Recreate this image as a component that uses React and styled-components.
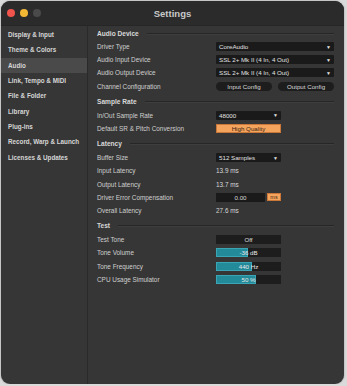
import React from "react";
import styled, { createGlobalStyle } from "styled-components";

const Global = createGlobalStyle`
  html, body { margin: 0; padding: 0; background: #dadada; }
  body { font-family: "Liberation Sans", Arial, sans-serif; }
`;

const Win = styled.div`
  width: 343px;
  height: 383px;
  margin: 1px 0 0 1px;
  border-radius: 9px;
  overflow: hidden;
  background: #363636;
  display: flex;
  flex-direction: column;
  box-shadow: 0 0 2px rgba(0, 0, 0, 0.35);
`;

const TitleBar = styled.div`
  height: 24px;
  flex: none;
  background: #2b2b2b;
  border-bottom: 1px solid #262626;
  display: flex;
  align-items: center;
  position: relative;
  padding-left: 6px;
  gap: 5px;
`;

const Light = styled.span`
  width: 8px;
  height: 8px;
  border-radius: 50%;
  background: ${(p) => p.c};
`;

const Title = styled.div`
  position: absolute;
  left: 0;
  right: 0;
  text-align: center;
  font-size: 9.5px;
  font-weight: 700;
  color: #c9c9c9;
  pointer-events: none;
`;

const Body = styled.div`
  flex: 1;
  display: flex;
`;

const Sidebar = styled.div`
  width: 86px;
  flex: none;
  border-right: 1px solid #2a2a2a;
  padding-top: 1px;
`;

const NavItem = styled.div`
  height: 15.3px;
  display: flex;
  align-items: center;
  padding-left: 7px;
  font-size: 6.3px;
  font-weight: 700;
  color: #d6d6d6;
  background: ${(p) => (p.active ? "#4a4a4a" : "transparent")};
  white-space: nowrap;
`;

const Main = styled.div`
  flex: 1;
  padding: 1px 10px 0 9px;
`;

const SectionHead = styled.div`
  height: ${(p) => (p.first ? 13 : 15)}px;
  margin-top: ${(p) => (p.first ? 0 : 1)}px;
  display: flex;
  align-items: center;
  gap: 8px;
  font-size: 6.6px;
  font-weight: 700;
  color: #d8d8d8;
  &::after {
    content: "";
    flex: 1;
    height: 1px;
    background: #262626;
    box-shadow: 0 1px 0 #3e3e3e;
  }
`;

const Row = styled.div`
  height: 13.2px;
  display: flex;
  align-items: center;
`;

const Label = styled.div`
  width: 119px;
  flex: none;
  font-size: 6.4px;
  color: #cfcfcf;
  white-space: nowrap;
`;

const Controls = styled.div`
  flex: 1;
  display: flex;
  gap: 6px;
`;

const Select = styled.div`
  width: ${(p) => (p.wide ? "118px" : "65px")};
  height: 9px;
  box-sizing: border-box;
  background: #1a1a1a;
  border-radius: 1px;
  display: flex;
  align-items: center;
  justify-content: space-between;
  padding: 0 3px 0 3px;
  font-size: 6.2px;
  color: #e2e2e2;
  white-space: nowrap;
`;

const Arrow = styled.span`
  font-size: 5px;
  color: #e0e0e0;
`;

const Pill = styled.div`
  width: 56px;
  height: 9px;
  border-radius: 5px;
  background: #1d1d1d;
  display: flex;
  align-items: center;
  justify-content: center;
  font-size: 6.2px;
  color: #d8d8d8;
`;

const Toggle = styled.div`
  width: 65px;
  height: 9px;
  box-sizing: border-box;
  background: ${(p) => (p.on ? "#f5a45e" : "#1d1d1d")};
  border: 1px solid ${(p) => (p.on ? "#c9783a" : "#1d1d1d")};
  display: flex;
  align-items: center;
  justify-content: center;
  font-size: 6.2px;
  color: ${(p) => (p.on ? "#3a2410" : "#dcdcdc")};
`;

const Value = styled.div`
  font-size: 6.4px;
  color: #d6d6d6;
`;

const NumField = styled.div`
  width: 49px;
  height: 9px;
  background: #1a1a1a;
  display: flex;
  align-items: center;
  justify-content: center;
  font-size: 6.2px;
  color: #d8d8d8;
`;

const Unit = styled.div`
  width: 14px;
  height: 8px;
  margin-left: -4px;
  background: #f5a45e;
  border: 1px solid #c9783a;
  box-sizing: border-box;
  display: flex;
  align-items: center;
  justify-content: center;
  font-size: 5.5px;
  color: #4a2a10;
`;

const Slider = styled.div`
  width: 65px;
  height: 9px;
  background: #1d1d1d;
  position: relative;
  overflow: hidden;
`;

const Fill = styled.div`
  position: absolute;
  left: 0;
  top: 0;
  bottom: 0;
  background: #238a9a;
  border: 1px solid #3aa5b5;
  box-sizing: border-box;
`;

const SliderText = styled.div`
  position: absolute;
  inset: 0;
  display: flex;
  align-items: center;
  justify-content: center;
  font-size: 6.2px;
  color: #e8e8e8;
`;

const nav = [
  "Display & Input",
  "Theme & Colors",
  "Audio",
  "Link, Tempo & MIDI",
  "File & Folder",
  "Library",
  "Plug-ins",
  "Record, Warp & Launch",
  "Licenses & Updates",
];

function Drop({ wide, children }) {
  return (
    <Select wide={wide}>
      <span>{children}</span>
      <Arrow>▼</Arrow>
    </Select>
  );
}

function Bar({ pct, text }) {
  return (
    <Slider>
      <Fill style={{ width: `${pct}%` }} />
      <SliderText>{text}</SliderText>
    </Slider>
  );
}

function Line({ label, children }) {
  return (
    <Row>
      <Label>{label}</Label>
      <Controls>{children}</Controls>
    </Row>
  );
}

export default function App() {
  return (
    <>
      <Global />
      <Win>
        <TitleBar>
          <Light c="#f0544c" />
          <Light c="#f3b935" />
          <Light c="#4a4a4a" />
          <Title>Settings</Title>
        </TitleBar>
        <Body>
          <Sidebar>
            {nav.map((n) => (
              <NavItem key={n} active={n === "Audio"}>
                {n}
              </NavItem>
            ))}
          </Sidebar>
          <Main>
            <SectionHead first>Audio Device</SectionHead>
            <Line label="Driver Type">
              <Drop wide>CoreAudio</Drop>
            </Line>
            <Line label="Audio Input Device">
              <Drop wide>SSL 2+ Mk II (4 In, 4 Out)</Drop>
            </Line>
            <Line label="Audio Output Device">
              <Drop wide>SSL 2+ Mk II (4 In, 4 Out)</Drop>
            </Line>
            <Line label="Channel Configuration">
              <Pill>Input Config</Pill>
              <Pill>Output Config</Pill>
            </Line>

            <SectionHead>Sample Rate</SectionHead>
            <Line label="In/Out Sample Rate">
              <Drop>48000</Drop>
            </Line>
            <Line label="Default SR & Pitch Conversion">
              <Toggle on>High Quality</Toggle>
            </Line>

            <SectionHead>Latency</SectionHead>
            <Line label="Buffer Size">
              <Drop>512 Samples</Drop>
            </Line>
            <Line label="Input Latency">
              <Value>13.9 ms</Value>
            </Line>
            <Line label="Output Latency">
              <Value>13.7 ms</Value>
            </Line>
            <Line label="Driver Error Compensation">
              <NumField>0.00</NumField>
              <Unit>ms</Unit>
            </Line>
            <Line label="Overall Latency">
              <Value>27.6 ms</Value>
            </Line>

            <SectionHead>Test</SectionHead>
            <Line label="Test Tone">
              <Toggle>Off</Toggle>
            </Line>
            <Line label="Tone Volume">
              <Bar pct={49} text="-36 dB" />
            </Line>
            <Line label="Tone Frequency">
              <Bar pct={55} text="440 Hz" />
            </Line>
            <Line label="CPU Usage Simulator">
              <Bar pct={62} text="50 %" />
            </Line>
          </Main>
        </Body>
      </Win>
    </>
  );
}
